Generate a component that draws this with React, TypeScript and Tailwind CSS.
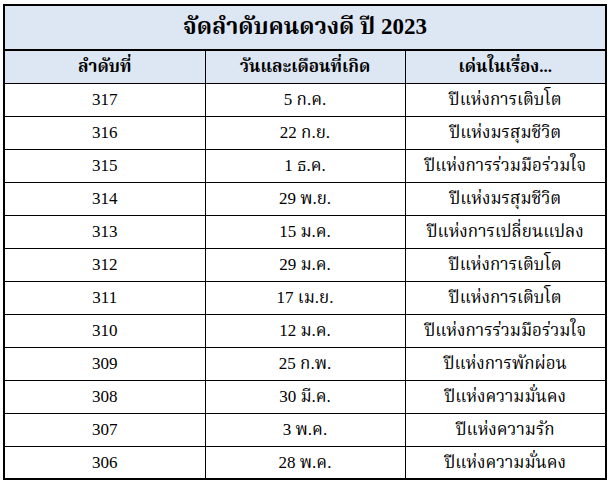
const rows: [string, string, string][] = [
  ['317', '5 ก.ค.', 'ปีแห่งการเติบโต'],
  ['316', '22 ก.ย.', 'ปีแห่งมรสุมชีวิต'],
  ['315', '1 ธ.ค.', 'ปีแห่งการร่วมมือร่วมใจ'],
  ['314', '29 พ.ย.', 'ปีแห่งมรสุมชีวิต'],
  ['313', '15 ม.ค.', 'ปีแห่งการเปลี่ยนแปลง'],
  ['312', '29 ม.ค.', 'ปีแห่งการเติบโต'],
  ['311', '17 เม.ย.', 'ปีแห่งการเติบโต'],
  ['310', '12 ม.ค.', 'ปีแห่งการร่วมมือร่วมใจ'],
  ['309', '25 ก.พ.', 'ปีแห่งการพักผ่อน'],
  ['308', '30 มี.ค.', 'ปีแห่งความมั่นคง'],
  ['307', '3 พ.ค.', 'ปีแห่งความรัก'],
  ['306', '28 พ.ค.', 'ปีแห่งความมั่นคง'],
];

export default function App() {
  return (
    <div className="w-[608px] h-[484px] bg-white pt-[4px] pl-[3px] font-['Liberation_Serif','Noto_Serif_Thai','Noto_Sans_Thai',serif] text-black">
      <table className="w-[602px] border-collapse table-fixed border-2 border-black">
        <colgroup>
          <col className="w-[201px]" />
          <col className="w-[200px]" />
          <col className="w-[201px]" />
        </colgroup>
        <thead>
          <tr className="h-[45px] bg-[#dde7f3]">
            <th colSpan={3} className="border-2 border-black text-[23px] font-bold p-0">
              จัดลำดับคนดวงดี ปี 2023
            </th>
          </tr>
          <tr className="h-[33px] bg-[#dde7f3]">
            <th className="border border-black text-[17px] font-bold p-0">ลำดับที่</th>
            <th className="border border-black text-[17px] font-bold p-0">วันและเดือนที่เกิด</th>
            <th className="border border-black text-[17px] font-bold p-0">เด่นในเรื่อง...</th>
          </tr>
        </thead>
        <tbody>
          {rows.map(([n, d, t]) => (
            <tr key={n} className="h-[33px]">
              <td className="border border-black text-center text-[17px] p-0">{n}</td>
              <td className="border border-black text-center text-[17px] p-0">{d}</td>
              <td className="border border-black text-center text-[17px] p-0">{t}</td>
            </tr>
          ))}
        </tbody>
      </table>
    </div>
  );
}
